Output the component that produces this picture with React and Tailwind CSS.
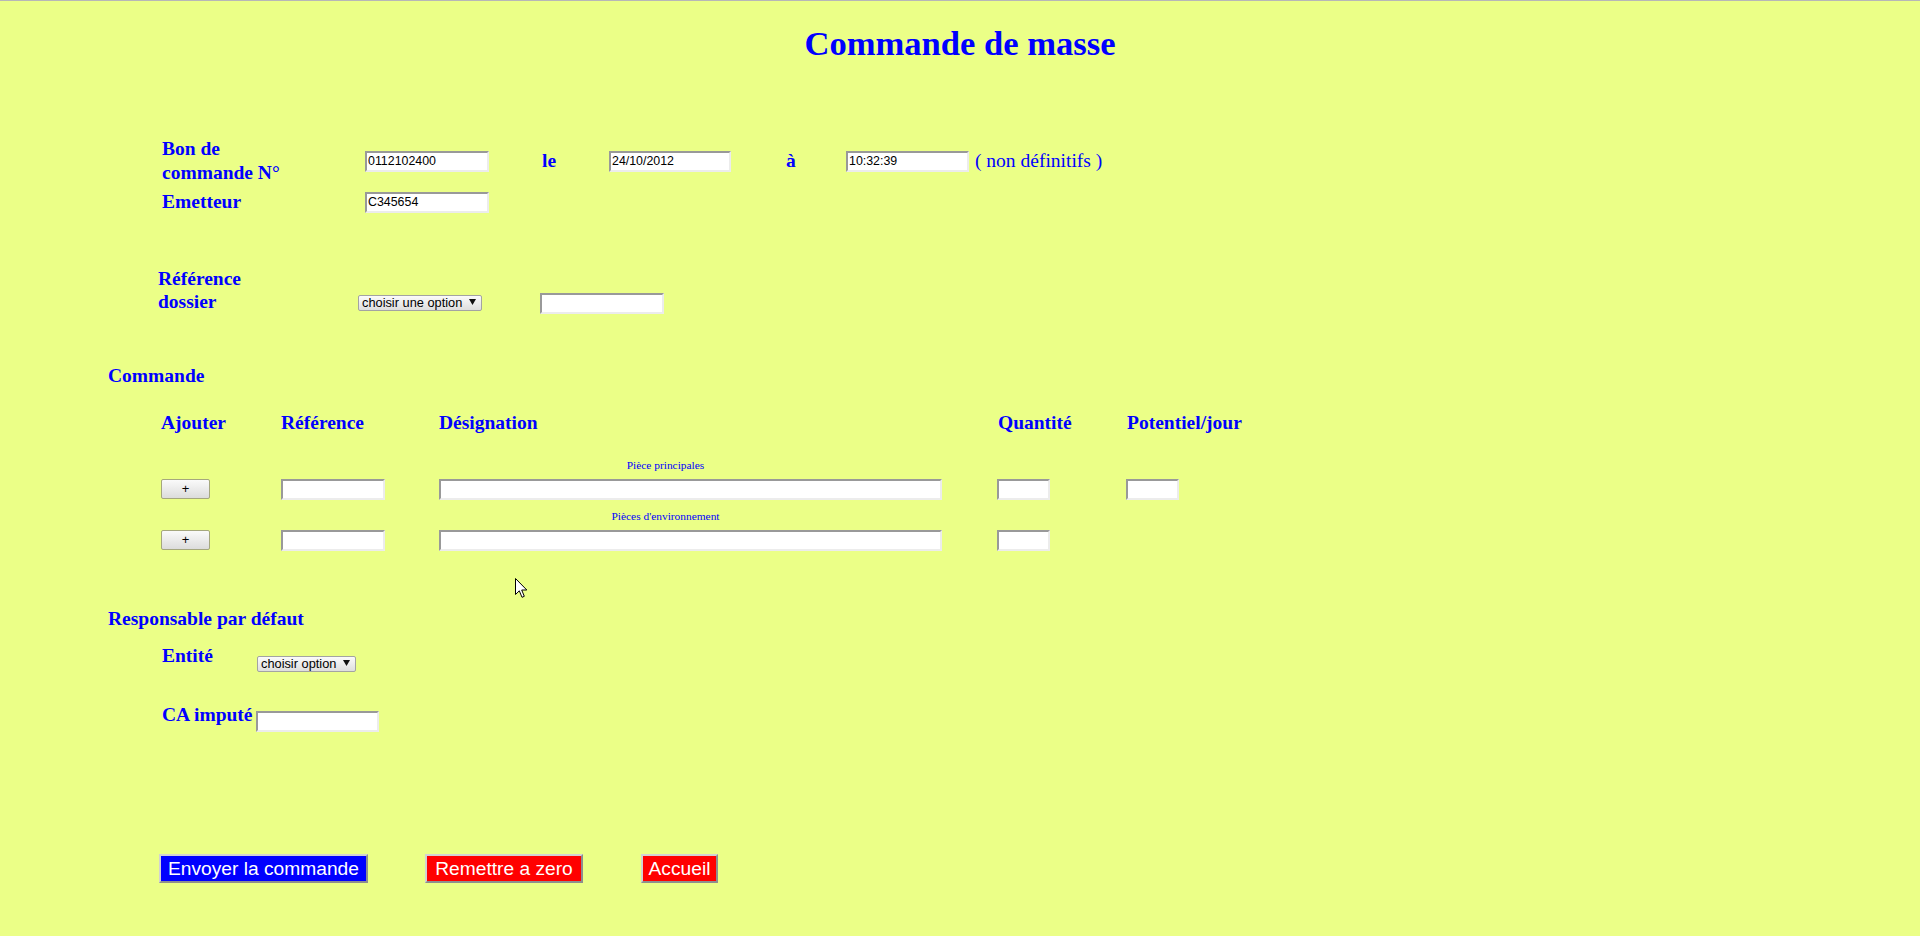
import React from "react";

const serif = "font-['Liberation_Serif','Times_New_Roman',serif]";
const sans = "font-['Liberation_Sans',Arial,sans-serif]";

function TextBox({ w, value = "" }) {
  return (
    <div
      className={`h-[21px] shrink-0 bg-white border-2 border-t-[#999999] border-l-[#999999] border-b-[#ececec] border-r-[#ececec] pl-px flex items-center whitespace-nowrap font-normal text-[12.4px] leading-[14px] text-black ${sans}`}
      style={{ width: w }}
    >
      {value}
    </div>
  );
}

function SelectBox({ w, label }) {
  return (
    <div
      className={`h-[16px] shrink-0 rounded-[2px] border border-[#a3a3a3] bg-gradient-to-b from-[#fbfbfb] to-[#dedede] pl-[3px] pr-[5px] flex items-center justify-between whitespace-nowrap font-normal text-[12.8px] leading-[14px] text-black ${sans}`}
      style={{ width: w }}
    >
      <span>{label}</span>
      <svg width="7" height="6" viewBox="0 0 7 6" className="mb-[2px] shrink-0">
        <polygon points="0,0 7,0 3.5,6" fill="#111" />
      </svg>
    </div>
  );
}

function PlusButton() {
  return (
    <div
      className={`w-[49px] h-[20px] shrink-0 rounded-[2px] border border-[#a5a77e] bg-gradient-to-b from-[#fafafa] to-[#dcdcdc] flex items-center justify-center font-normal text-[13px] leading-[14px] text-black ${sans}`}
    >
      +
    </div>
  );
}

function BigButton({ w, bg, children }) {
  return (
    <div
      className={`h-[29px] shrink-0 border-2 border-t-[#d2d2d2] border-l-[#d2d2d2] border-r-[#8e8e8e] border-b-[#8e8e8e] flex items-center justify-center whitespace-nowrap font-normal text-[19.2px] leading-[22px] text-white ${sans} ${bg}`}
      style={{ width: w }}
    >
      {children}
    </div>
  );
}

export default function App() {
  return (
    <div className={`relative min-h-screen w-full bg-[#ebff87] ${serif} text-[#0000ff]`}>
      <div className="h-px w-full bg-[#b7b7b7]" />

      <h1 className="mt-[22px] text-center text-[34.6px] leading-[40px] font-bold">
        Commande de masse
      </h1>

      {/* Bon de commande */}
      <div className="mt-[74px] flex h-[48px] items-center pl-[162px] text-[19.5px] leading-[24px] font-bold">
        <div className="w-[203px] shrink-0">
          Bon de
          <br />
          commande N°
        </div>
        <TextBox w={124} value="0112102400" />
        <div className="w-[120px] shrink-0 pl-[53px]">le</div>
        <TextBox w={122} value="24/10/2012" />
        <div className="w-[115px] shrink-0 pl-[55px]">à</div>
        <TextBox w={123} value="10:32:39" />
        <div className="ml-[6px] font-normal">( non définitifs )</div>
      </div>

      <div className="mt-[5px] flex h-[24px] items-center pl-[162px] text-[19.5px] leading-[24px] font-bold">
        <div className="w-[203px] shrink-0">Emetteur</div>
        <TextBox w={124} value="C345654" />
      </div>

      {/* Référence dossier */}
      <div className="mt-[53px] flex items-start pl-[158px] text-[19.5px] leading-[23px] font-bold">
        <div className="w-[200px] shrink-0">
          Référence
          <br />
          dossier
        </div>
        <div className="mt-[28px]">
          <SelectBox w={124} label="choisir une option" />
        </div>
        <div className="ml-[58px] mt-[26px]">
          <TextBox w={124} />
        </div>
      </div>

      {/* Commande */}
      <div className="mt-[50px] pl-[108px] text-[19.5px] leading-[24px] font-bold">Commande</div>

      <div className="mt-[23px] flex pl-[161px] text-[19.5px] leading-[24px] font-bold">
        <div className="w-[120px] shrink-0">Ajouter</div>
        <div className="w-[158px] shrink-0">Référence</div>
        <div className="w-[559px] shrink-0">Désignation</div>
        <div className="w-[129px] shrink-0">Quantité</div>
        <div className="shrink-0">Potentiel/jour</div>
      </div>

      <div className="mt-[24px] pl-[161px]">
        <div className="w-[1009px] text-center text-[11.4px] leading-[13px]">Pièce principales</div>
      </div>
      <div className="mt-[7px] flex items-start pl-[161px]">
        <PlusButton />
        <div className="ml-[71px]">
          <TextBox w={104} />
        </div>
        <div className="ml-[54px]">
          <TextBox w={503} />
        </div>
        <div className="ml-[55px]">
          <TextBox w={53} />
        </div>
        <div className="ml-[76px]">
          <TextBox w={53} />
        </div>
      </div>

      <div className="mt-[10px] pl-[161px]">
        <div className="w-[1009px] text-center text-[11.4px] leading-[13px]">Pièces d'environnement</div>
      </div>
      <div className="mt-[7px] flex items-start pl-[161px]">
        <PlusButton />
        <div className="ml-[71px]">
          <TextBox w={104} />
        </div>
        <div className="ml-[54px]">
          <TextBox w={503} />
        </div>
        <div className="ml-[55px]">
          <TextBox w={53} />
        </div>
      </div>

      {/* Responsable */}
      <div className="mt-[56px] pl-[108px] text-[19.5px] leading-[24px] font-bold">Responsable par défaut</div>

      <div className="mt-[13px] flex items-start pl-[162px] text-[19.5px] leading-[24px] font-bold">
        <div className="w-[95px] shrink-0">Entité</div>
        <div className="mt-[12px]">
          <SelectBox w={99} label="choisir option" />
        </div>
      </div>

      <div className="mt-[31px] flex items-start pl-[162px] text-[19.5px] leading-[24px] font-bold">
        <div className="w-[94px] shrink-0">CA imputé</div>
        <div className="mt-[8px]">
          <TextBox w={123} />
        </div>
      </div>

      {/* Buttons */}
      <div className="mt-[122px] flex items-start pl-[159px]">
        <BigButton w={209} bg="bg-[#0000ff]">Envoyer la commande</BigButton>
        <div className="ml-[57px]">
          <BigButton w={158} bg="bg-[#ff0000]">Remettre a zero</BigButton>
        </div>
        <div className="ml-[58px]">
          <BigButton w={77} bg="bg-[#ff0000]">Accueil</BigButton>
        </div>
      </div>

      {/* mouse cursor */}
      <svg
        className="absolute left-[515px] top-[578px]"
        width="13"
        height="21"
        viewBox="0 0 13 21"
      >
        <path
          d="M0.5 0.5 L0.5 16.5 L4.3 12.8 L7 19.3 L9.3 18.3 L6.7 12 L11.8 12 Z"
          fill="#ffffff"
          stroke="#000000"
          strokeWidth="1"
          strokeLinejoin="miter"
        />
      </svg>
    </div>
  );
}
